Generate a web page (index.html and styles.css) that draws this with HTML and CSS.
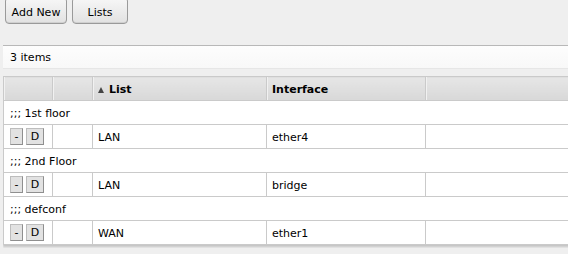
FILE: index.html
```html
<!DOCTYPE html>
<html lang="en">
<head>
    <meta charset="UTF-8">
    <title>Interface Lists</title>
    <link rel="stylesheet" href="styles.css">
</head>
<body>
    <div class="toolbar">
        <button class="btn btn-add">Add New</button>
        <button class="btn btn-lists">Lists</button>
    </div>

    <div class="status-bar">3 items</div>

    <div class="table-wrap">
        <table class="list-table">
            <colgroup>
                <col class="c-act">
                <col class="c-flag">
                <col class="c-list">
                <col class="c-iface">
                <col class="c-rest">
            </colgroup>
            <thead>
                <tr>
                    <th></th>
                    <th></th>
                    <th><span class="sort-up"></span>List</th>
                    <th>Interface</th>
                    <th></th>
                </tr>
            </thead>
            <tbody>
                <tr class="comment"><td colspan="5">;;; 1st floor</td></tr>
                <tr>
                    <td class="actions"><span class="mini">-</span><span class="mini">D</span></td>
                    <td></td>
                    <td>LAN</td>
                    <td>ether4</td>
                    <td></td>
                </tr>
                <tr class="comment"><td colspan="5">;;; 2nd Floor</td></tr>
                <tr>
                    <td class="actions"><span class="mini">-</span><span class="mini">D</span></td>
                    <td></td>
                    <td>LAN</td>
                    <td>bridge</td>
                    <td></td>
                </tr>
                <tr class="comment"><td colspan="5">;;; defconf</td></tr>
                <tr>
                    <td class="actions"><span class="mini">-</span><span class="mini">D</span></td>
                    <td></td>
                    <td>WAN</td>
                    <td>ether1</td>
                    <td></td>
                </tr>
            </tbody>
        </table>
    </div>
</body>
</html>
```

FILE: styles.css
```css
body {
    margin: 0;
    background-color: #efefef;
    font-family: "DejaVu Sans", Verdana, sans-serif;
    font-size: 11px;
    color: #000;
    overflow: hidden;
}

.toolbar {
    display: flex;
    gap: 5px;
    padding-left: 5px;
    margin-top: -3px;
}

.btn {
    height: 27px;
    padding: 3px 0 0 0;
    font-family: inherit;
    font-size: 11px;
    color: #000;
    border: 1px solid #9a9a9a;
    border-radius: 4px;
    background: linear-gradient(#f7f7f7, #e2e2e2);
    box-shadow: inset 0 -1px 0 #d0d0d0;
}

.btn-add {
    width: 62px;
}

.btn-lists {
    width: 56px;
}

.status-bar {
    margin: 21px 0 0 3px;
    height: 22px;
    line-height: 24px;
    padding-left: 7px;
    border-top: 1px solid #b8b8b8;
    border-bottom: 1px solid #e6e6e6;
    background: linear-gradient(#fdfdfd, #f8f8f8);
}

.table-wrap {
    margin: 7px 0 0 3px;
    padding-bottom: 3px;
    overflow: hidden;
}

.list-table {
    width: 720px;
    border-collapse: collapse;
    table-layout: fixed;
    background-color: #fff;
    box-shadow: 0 2px 2px rgba(0,0,0,0.18);
}

.c-act { width: 49px; }
.c-flag { width: 40px; }
.c-list { width: 174px; }
.c-iface { width: 159px; }

.list-table th,
.list-table td {
    height: 24px;
    padding: 2px 0 0 5px;
    border: 1px solid #cacaca;
    text-align: left;
    white-space: nowrap;
    box-sizing: border-box;
}

.list-table th {
    font-weight: bold;
    background: linear-gradient(#e6e6e6, #d8d8d8);
    box-shadow: inset 1px 0 0 #f1f1f1;
}

.list-table tr.comment td {
    padding-left: 6px;
}

.list-table td.actions {
    padding: 0 0 0 6px;
}

.mini {
    display: inline-block;
    height: 15px;
    line-height: 15px;
    margin-right: 3px;
    padding: 0 3px;
    background-color: #e2e2e2;
    border: 1px solid #a8a8a8;
    border-color: #bdbdbd #8f8f8f #8f8f8f #bdbdbd;
    vertical-align: middle;
    text-align: center;
}

.mini:first-child {
    min-width: 5px;
}

.mini:last-child {
    min-width: 10px;
}

.sort-up {
    display: inline-block;
    width: 0;
    height: 0;
    margin: 0 5px 1px 0;
    border-left: 3px solid transparent;
    border-right: 3px solid transparent;
    border-bottom: 6px solid #444;
    vertical-align: middle;
}
```
